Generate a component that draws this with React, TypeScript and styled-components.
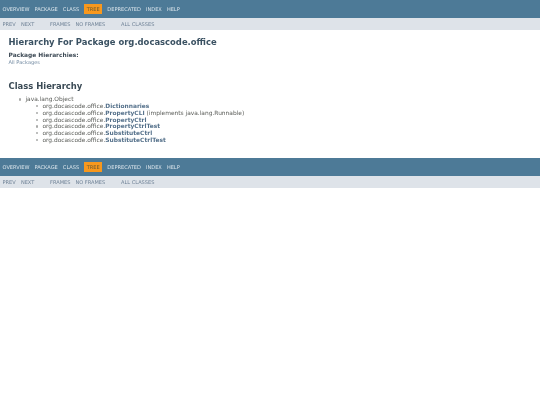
import React from 'react'
import styled, { createGlobalStyle } from 'styled-components'

const GlobalStyle = createGlobalStyle`
  html, body {
    margin: 0;
    padding: 0;
    background: #ffffff;
    color: #5a5c58;
    font-family: "DejaVu Sans", sans-serif;
    font-size: 5.9px;
  }
  #root {
    will-change: transform;
  }
  a {
    color: #4a6782;
    text-decoration: none;
  }
`

const TopNav = styled.div`
  display: flex;
  box-sizing: border-box;
  height: 18.4px;
  background: #4d7a97;
  padding: 6.2px 0 0 2.5px;
`

const NavList = styled.ul`
  display: flex;
  list-style: none;
  margin: 0;
  padding: 0;
`

const NavItem = styled.li<{ $active?: boolean }>`
  font-size: 5.06px;
  line-height: 6px;
  height: 6px;
  margin-right: 5.1px;
  color: ${({ $active }) => ($active ? '#6b5a30' : '#dbe5ec')};
  ${({ $active }) =>
    $active &&
    `
    background: #f8981d;
    padding: 2.2px 2.5px;
    margin: -2.2px 5.1px 0 0;
  `}
`

const SubNav = styled.div`
  display: flex;
  box-sizing: border-box;
  height: 12.1px;
  background: #dee3e9;
  font-size: 5.06px;
  line-height: 12.1px;
  padding-left: 2.5px;
`

const SubGroup = styled.div<{ $width: number; $gap: number }>`
  display: flex;
  gap: ${({ $gap }) => $gap}px;
  width: ${({ $width }) => $width}px;
`

const SubLink = styled.a`
  color: #6f8296;
`

const Header = styled.div`
  padding: 6.5px 8.5px 0;
`

const Title = styled.h1`
  margin: 0;
  font-size: 8.44px;
  line-height: 10px;
  font-weight: bold;
  color: #3a5162;
`

const HierarchyLabel = styled.div`
  margin-top: 5px;
  font-size: 5.9px;
  line-height: 7px;
  font-weight: bold;
  color: #3d4a55;
`

const PackageLink = styled.a`
  display: block;
  font-size: 5.06px;
  line-height: 6px;
  color: #7088a0;
`

const Content = styled.main`
  padding: 16px 8.5px 0;
`

const SectionTitle = styled.h2`
  margin: 0;
  font-size: 8.44px;
  line-height: 10px;
  font-weight: bold;
  color: #3a4a55;
`

const OuterList = styled.ul`
  margin: 5.5px 0 0;
  padding: 0 0 0 17px;
  font-size: 5.9px;
  line-height: 6.75px;
  list-style: none;
`

const InnerList = styled.ul`
  margin: 0;
  padding: 0 0 0 16.9px;
  list-style: none;
`

const Bullet = styled.span`
  display: inline-block;
  box-sizing: border-box;
  width: 2.2px;
  height: 2.2px;
  margin: 0 4.4px 0.9px -6.6px;
  border-radius: 50%;
  vertical-align: middle;
  background: #a9aaa8;
`

const ClassLink = styled.a`
  font-weight: bold;
  color: #54708a;
`

const Bottom = styled.div`
  margin-top: 14px;
`

const navItems = ['OVERVIEW', 'PACKAGE', 'CLASS', 'TREE', 'DEPRECATED', 'INDEX', 'HELP']

const classes = [
  { name: 'Dictionnaries' },
  { name: 'PropertyCLI', extra: ' (implements java.lang.Runnable)' },
  { name: 'PropertyCtrl' },
  { name: 'PropertyCtrlTest' },
  { name: 'SubstituteCtrl' },
  { name: 'SubstituteCtrlTest' },
]

const Navigation: React.FunctionComponent = () => (
  <div>
    <TopNav>
      <NavList>
        {navItems.map((item) => (
          <NavItem key={item} $active={item === 'TREE'}>
            {item}
          </NavItem>
        ))}
      </NavList>
    </TopNav>
    <SubNav>
      <SubGroup $width={47.5} $gap={5.2}>
        <SubLink>PREV</SubLink>
        <SubLink>NEXT</SubLink>
      </SubGroup>
      <SubGroup $width={71} $gap={5}>
        <SubLink>FRAMES</SubLink>
        <SubLink>NO FRAMES</SubLink>
      </SubGroup>
      <SubLink>ALL CLASSES</SubLink>
    </SubNav>
  </div>
)

const App: React.FunctionComponent = () => (
  <>
    <GlobalStyle />
    <Navigation />
    <Header>
      <Title>Hierarchy For Package org.docascode.office</Title>
      <HierarchyLabel>Package Hierarchies:</HierarchyLabel>
      <PackageLink>All Packages</PackageLink>
    </Header>
    <Content>
      <SectionTitle>Class Hierarchy</SectionTitle>
      <OuterList>
        <li>
          <Bullet />
          java.lang.Object
          <InnerList>
            {classes.map((c) => (
              <li key={c.name}>
                <Bullet />
                org.docascode.office.
                <ClassLink>{c.name}</ClassLink>
                {c.extra}
              </li>
            ))}
          </InnerList>
        </li>
      </OuterList>
    </Content>
    <Bottom>
      <Navigation />
    </Bottom>
  </>
)

export default App
